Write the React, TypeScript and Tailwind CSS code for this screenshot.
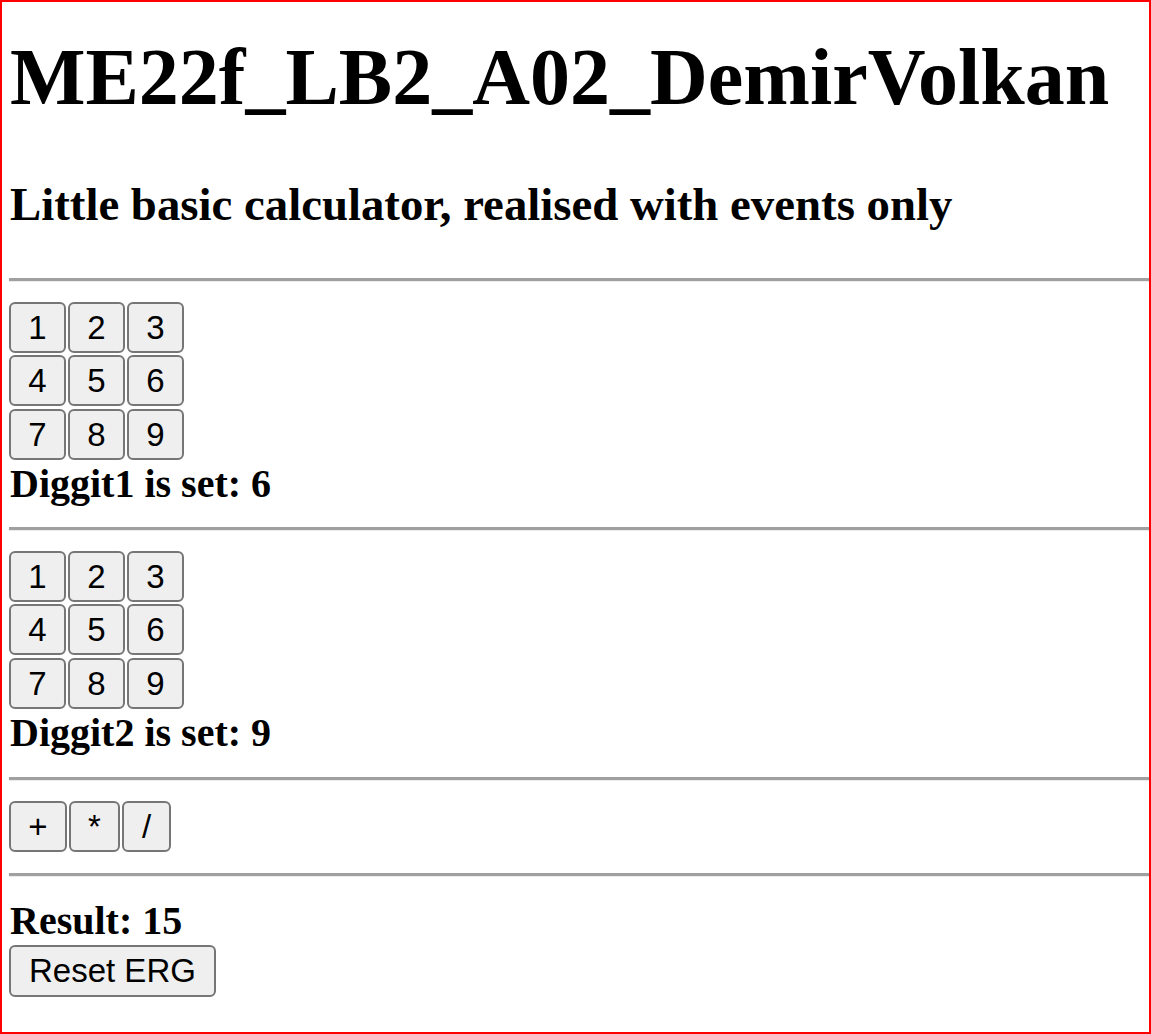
import { useState } from "react";

const serif = { fontFamily: '"Liberation Serif", "Times New Roman", serif' };

const btn =
  "flex items-center justify-center h-[51px] rounded-[6px] border-2 border-[#767676] bg-[#efefef] text-[33px] leading-none text-black font-['Liberation_Sans',Arial,sans-serif]";

const Divider = ({ className = "" }: { className?: string }) => (
  <div className={`border-t-[3px] border-b border-t-[#a0a0a0] border-b-[#ececec] ${className}`} />
);

const DigitPad = ({ onPick }: { onPick: (n: number) => void }) => (
  <div className="grid grid-cols-[57px_57px_57px] gap-x-[2px] gap-y-[2.5px]">
    {[1, 2, 3, 4, 5, 6, 7, 8, 9].map((n) => (
      <button key={n} className={`${btn} w-[57px]`} onClick={() => onPick(n)}>
        {n}
      </button>
    ))}
  </div>
);

export default function App() {
  const [d1, setD1] = useState(6);
  const [d2, setD2] = useState(9);
  const [result, setResult] = useState<number | string>(15);

  return (
    <div className="flex h-screen w-full flex-col border-2 border-[#ff0000] bg-white pl-[8px] text-black" style={serif}>
      <h1 className="mt-[29px] text-[80px] leading-[92px] font-bold">ME22f_LB2_A02_DemirVolkan</h1>
      <h3 className="mt-[53.6px] text-[46.8px] leading-[54px] font-bold">
        Little basic calculator, realised with events only
      </h3>

      <Divider className="mt-[47px] -ml-px" />

      {/* first digit */}
      <div className="mt-[20px] -ml-px">
        <DigitPad onPick={setD1} />
      </div>
      <div className="mt-[1px] text-[40px] leading-[46px] font-bold">Diggit1 is set: {d1}</div>

      <Divider className="mt-[20px] -ml-px" />

      {/* second digit */}
      <div className="mt-[20px] -ml-px">
        <DigitPad onPick={setD2} />
      </div>
      <div className="mt-[1px] text-[40px] leading-[46px] font-bold">Diggit2 is set: {d2}</div>

      <Divider className="mt-[21px] -ml-px" />

      {/* operators */}
      <div className="mt-[20px] -ml-px flex gap-[2px]">
        <button className={`${btn} w-[58px]`} onClick={() => setResult(d1 + d2)}>
          +
        </button>
        <button className={`${btn} w-[51px]`} onClick={() => setResult(d1 * d2)}>
          *
        </button>
        <button className={`${btn} w-[49px]`} onClick={() => setResult(d1 / d2)}>
          /
        </button>
      </div>

      <Divider className="mt-[21px] -ml-px" />

      <div className="mt-[21px] text-[40px] leading-[46px] font-bold">Result: {result}</div>
      <div className="mt-[1px] -ml-px flex">
        <button className={`${btn} h-[52px] px-[18px]`} onClick={() => setResult(0)}>
          Reset ERG
        </button>
      </div>
    </div>
  );
}
